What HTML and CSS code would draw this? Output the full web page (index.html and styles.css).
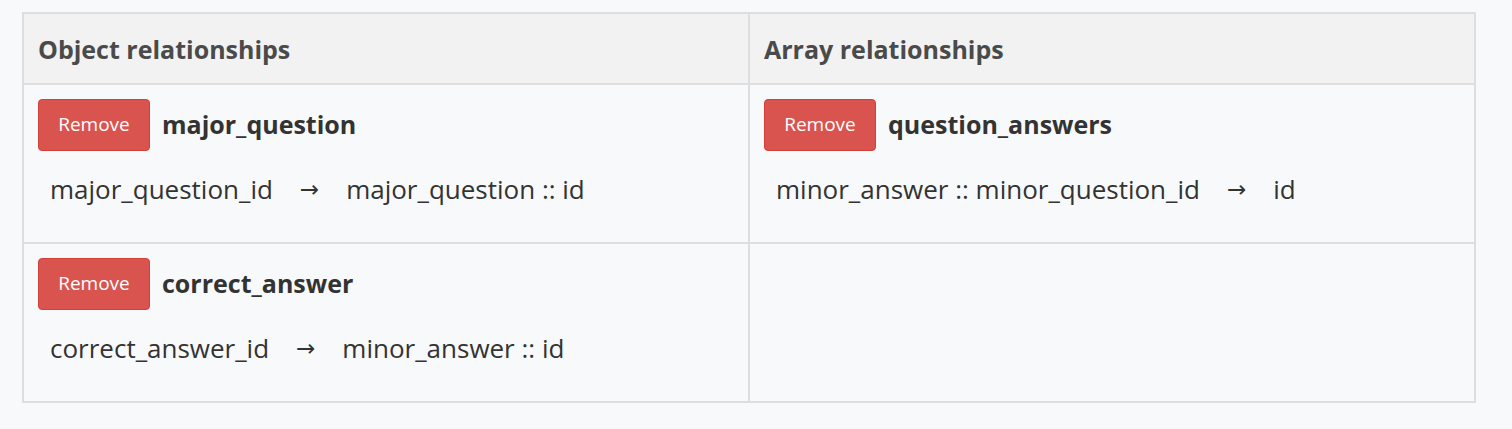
FILE: index.html
```html
<!DOCTYPE html>
<html>
<head>
<meta charset="utf-8">
<link rel="stylesheet" href="styles.css">
</head>
<body>
<div class="page">
  <table class="rel-table">
    <thead>
      <tr>
        <th>Object relationships</th>
        <th>Array relationships</th>
      </tr>
    </thead>
    <tbody>
      <tr>
        <td>
          <div class="rel-head"><button class="btn-remove">Remove</button><span class="rel-name">major_question</span></div>
          <div class="rel-map"><span>major_question_id</span><span class="arrow">&rarr;</span><span>major_question :: id</span></div>
        </td>
        <td>
          <div class="rel-head"><button class="btn-remove">Remove</button><span class="rel-name">question_answers</span></div>
          <div class="rel-map"><span>minor_answer :: minor_question_id</span><span class="arrow">&rarr;</span><span>id</span></div>
        </td>
      </tr>
      <tr>
        <td>
          <div class="rel-head"><button class="btn-remove">Remove</button><span class="rel-name">correct_answer</span></div>
          <div class="rel-map"><span>correct_answer_id</span><span class="arrow">&rarr;</span><span>minor_answer :: id</span></div>
        </td>
        <td></td>
      </tr>
    </tbody>
  </table>
</div>
</body>
</html>
```
FILE: styles.css
```css
html, body {
  margin: 0;
  padding: 0;
  background: #f8f9fb;
  font-family: "Open Sans", "Noto Sans", sans-serif;
  color: #333;
}
.page {
  padding: 12px 36px 0 22px;
}
.rel-table {
  width: 1454px;
  border-collapse: collapse;
  table-layout: fixed;
  border: 2px solid #dedede;
  background: #f8f9fa;
}
.rel-table th,
.rel-table td {
  border: 2px solid #dedede;
  text-align: left;
  vertical-align: top;
}
.rel-table th {
  background: #f2f2f2;
  height: 71px;
  padding: 0 14px;
  font-size: 25px;
  font-weight: 700;
  color: #4a4a4a;
  vertical-align: middle;
  box-sizing: border-box;
}
.rel-table td {
  height: 159px;
  padding: 14px 14px 14px 14px;
  box-sizing: border-box;
}
.rel-head {
  display: flex;
  align-items: center;
  gap: 12px;
}
.btn-remove {
  width: 112px;
  height: 52px;
  background: #d9534f;
  border: 1px solid #d43f3a;
  border-radius: 4px;
  color: #fff;
  font-family: inherit;
  font-size: 19px;
  padding: 0 0 2px;
}
.rel-name {
  font-size: 25px;
  font-weight: 700;
  color: #333;
  margin-top: -3px;
}
.rel-map {
  display: flex;
  align-items: center;
  gap: 27px;
  margin-top: 20px;
  padding-left: 12px;
  font-size: 26px;
  color: #333;
}
.arrow {
  font-family: "DejaVu Sans", sans-serif;
  font-size: 23px;
}
```
